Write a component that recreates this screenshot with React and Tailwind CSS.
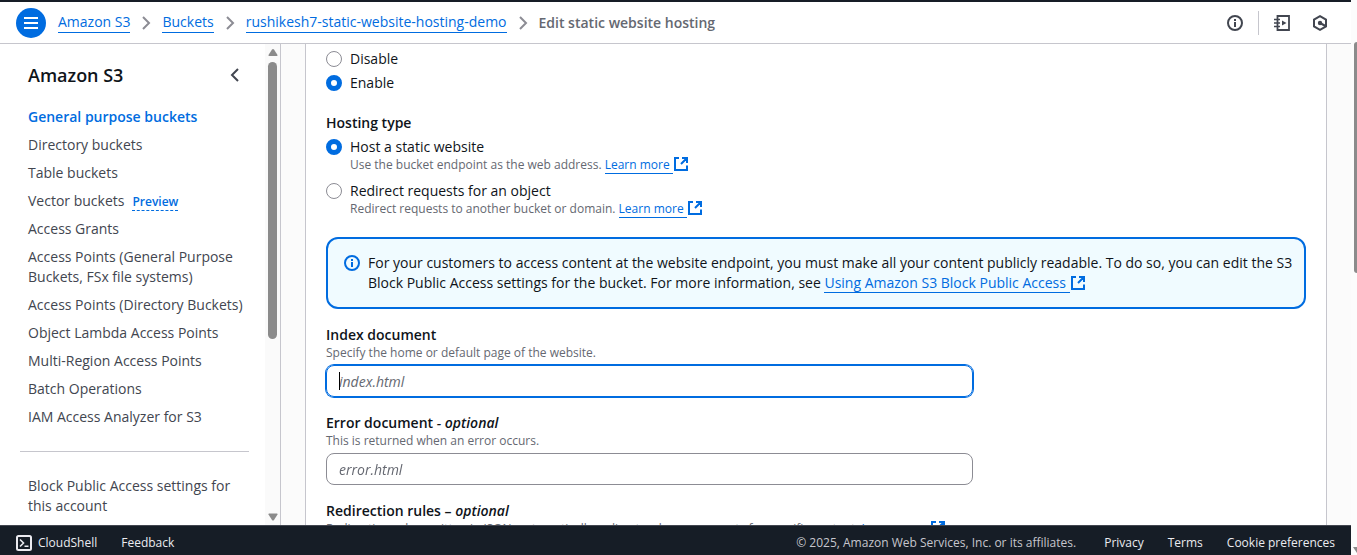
import React from "react";

const topLinks = [
  { label: "General purpose buckets", active: true },
  { label: "Directory buckets" },
  { label: "Table buckets" },
  { label: "Vector buckets", preview: true },
  { label: "Access Grants" },
  { label: "Access Points (General Purpose Buckets, FSx file systems)" },
  { label: "Access Points (Directory Buckets)" },
  { label: "Object Lambda Access Points" },
  { label: "Multi-Region Access Points" },
  { label: "Batch Operations" },
  { label: "IAM Access Analyzer for S3" },
];

const crumbs = ["Amazon S3", "Buckets", "rushikesh7-static-website-hosting-demo"];

function Icon({ className = "", width = 2, children }) {
  return (
    <svg
      viewBox="0 0 16 16"
      className={`size-4 shrink-0 ${className}`}
      fill="none"
      stroke="currentColor"
      strokeWidth={width}
      aria-hidden="true"
    >
      {children}
    </svg>
  );
}

function InfoIcon({ className }) {
  return (
    <Icon className={className}>
      <circle cx="8" cy="8" r="7" />
      <path d="M8 12V7M8 6V4" />
    </Icon>
  );
}

function ExternalLink({ children }) {
  return (
    <a href="#" className="text-[#006ce0]">
      <span className="border-b border-[#006ce0]">{children}&nbsp;</span>
      <Icon className="-my-1 inline align-[1px]">
        <path d="M6 2H2v12h12V9.5M9 2h5v5M13.5 2.5 8 8" />
      </Icon>
    </a>
  );
}

function RadioOption({ name, label, description, checked }) {
  return (
    <div className="flex gap-2">
      <input
        type="radio"
        name={name}
        id={`${name}-${label}`}
        defaultChecked={checked}
        className="mt-0.5 size-4 shrink-0 appearance-none rounded-full border border-[#8c8c94] bg-white checked:border-5 checked:border-[#006ce0]"
      />
      <div>
        <label htmlFor={`${name}-${label}`} className="block">
          {label}
        </label>
        {description && (
          <p className="text-xs text-[#656871]">
            {description} <ExternalLink>Learn more</ExternalLink>
          </p>
        )}
      </div>
    </div>
  );
}

function TextField({ id, label, optional, description, placeholder, active }) {
  return (
    <div>
      <label htmlFor={id} className="block font-semibold">
        {label}
        {optional && <i> - optional</i>}
      </label>
      <p className="text-xs text-[#656871]">{description}</p>
      <div className="relative mt-1 w-[66%]">
        <input
          id={id}
          type="text"
          autoFocus={active}
          placeholder={placeholder}
          className="peer block h-8 w-full rounded-lg border border-[#8c8c94] px-3 outline-none placeholder:text-[#656871] placeholder:italic placeholder-shown:caret-transparent focus:border-[#006ce0] focus:ring-1 focus:ring-[#006ce0]"
        />
        <span
          className="pointer-events-none absolute top-[7px] left-[13px] hidden h-[18px] w-px bg-black peer-focus:peer-placeholder-shown:block"
          aria-hidden="true"
        />
      </div>
    </div>
  );
}

function Header() {
  return (
    <header className="flex h-[44px] shrink-0 items-center border-t-2 border-b border-t-[#161d26] border-b-[#c6c6cd] bg-white pr-[23px] pl-4">
      <button aria-label="Open navigation" className="flex size-[30px] items-center justify-center rounded-full bg-[#006ce0] text-white">
        <Icon>
          <path d="M1 3h14M1 8h14M1 13h14" />
        </Icon>
      </button>
      <nav aria-label="Breadcrumbs" className="ml-3 flex items-center gap-2">
        {crumbs.map((crumb) => (
          <React.Fragment key={crumb}>
            <a href="#" className="border-b border-[#006ce0] text-[#006ce0]">
              {crumb}
            </a>
            <Icon className="text-[#8c8c94]">
              <path d="m5 2 6 6-6 6" />
            </Icon>
          </React.Fragment>
        ))}
        <span className="font-semibold text-[#656871]">Edit static website hosting</span>
      </nav>
      <div className="ml-auto flex items-center text-[#424650]">
        <button aria-label="Info">
          <InfoIcon />
        </button>
        <div className="mx-[15px] h-6 w-px bg-[#c6c6cd]" />
        <button aria-label="Tutorials">
          <Icon>
            <path d="M3.5 1h11.5v14H3.5z" strokeWidth="1.8" />
            <path d="M0 4.5h6M0 8h6M0 11.5h6" strokeWidth="1.6" />
            <path d="M8 5.5v5L12.5 8z" fill="currentColor" stroke="none" />
          </Icon>
        </button>
        <button aria-label="Settings" className="ml-[22px]">
          <Icon>
            <path d="m8 1.2 6 3.4v6.8l-6 3.4-6-3.4V4.6z" />
            <circle cx="8" cy="8" r="2.2" fill="currentColor" stroke="none" />
            <path d="m8 8 5.5 3" />
          </Icon>
        </button>
      </div>
    </header>
  );
}

function Sidebar() {
  return (
    <aside className="flex w-[281px] shrink-0 overflow-hidden border-r border-[#c6c6cd] bg-white">
      <div className="min-w-0 flex-1 px-5 pt-5">
        <div className="flex items-center justify-between pr-0.5 pl-2">
          <h2 className="text-lg leading-[22px] font-semibold text-[#0f141a]">Amazon S3</h2>
          <button aria-label="Close navigation" className="text-[#424650]">
            <Icon>
              <path d="M11 2 5 8l6 6" />
            </Icon>
          </button>
        </div>
        <ul className="mt-[21px] flex flex-col gap-2 pl-2 text-[#424650]">
          {topLinks.map(({ label, active, preview }) => (
            <li key={label}>
              <a href="#" className={active ? "font-semibold text-[#006ce0]" : ""}>
                {label}
              </a>
              {preview && (
                <button className="ml-2 border-b border-dashed border-[#006ce0] text-xs font-semibold text-[#006ce0]">
                  Preview
                </button>
              )}
            </li>
          ))}
        </ul>
        <hr className="-mr-1 mt-6 mb-6 border-[#c6c6cd]" />
        <a href="#" className="block pl-2 text-[#424650]">
          Block Public Access settings for this account
        </a>
      </div>
      <div className="flex w-[15px] shrink-0 flex-col items-center bg-[#fafafa] py-1" aria-hidden="true">
        <svg viewBox="0 0 10 8" className="h-2 w-2.5 shrink-0 fill-[#8b8b8b]">
          <path d="M4 1.6Q5 .4 6 1.6L9.500 7q.3 1-.7 1H1.200Q.2 8 .5 7z" />
        </svg>
        <div className="mt-1.5 h-[277px] w-[9px] rounded-full bg-[#8b8b8b]" />
        <svg viewBox="0 0 10 8" className="mt-auto h-2 w-2.5 shrink-0 fill-[#8b8b8b]">
          <path d="M4 6.9Q5 8.1 6 6.9L9.500 1.500q.3-1-.7-1H1.200Q.2.500.500 1.500z" />
        </svg>
      </div>
    </aside>
  );
}

function HostingForm() {
  return (
    <main className="min-w-0 flex-1 overflow-hidden bg-[#fbfbfb] px-6">
      <form className="h-full border-x border-[#c6c6cd] bg-white px-5 pt-[5px]">
        <div className="flex flex-col gap-1">
          <RadioOption name="hosting" label="Disable" />
          <RadioOption name="hosting" label="Enable" checked />
        </div>
        <fieldset className="mt-5">
          <legend className="font-semibold">Hosting type</legend>
          <div className="mt-1 flex flex-col gap-2">
            <RadioOption
              name="type"
              label="Host a static website"
              description="Use the bucket endpoint as the web address."
              checked
            />
            <RadioOption
              name="type"
              label="Redirect requests for an object"
              description="Redirect requests to another bucket or domain."
            />
          </div>
        </fieldset>
        <div className="mt-5 flex gap-2 rounded-xl border-2 border-[#006ce0] bg-[#f0fbff] py-3.5 pr-2 pl-4">
          <InfoIcon className="mt-0.5 text-[#006ce0]" />
          <p>
            For your customers to access content at the website endpoint, you must make all your content publicly
            readable. To do so, you can edit the S3 Block Public Access settings for the bucket. For more information,
            see <ExternalLink>Using Amazon S3 Block Public Access</ExternalLink>
          </p>
        </div>
        <div className="mt-4 flex flex-col gap-4">
          <TextField
            id="index-document"
            label="Index document"
            description="Specify the home or default page of the website."
            placeholder="index.html"
            active
          />
          <TextField
            id="error-document"
            label="Error document"
            optional
            description="This is returned when an error occurs."
            placeholder="error.html"
          />
          <div>
            <h3 className="font-semibold">
              Redirection rules – <i>optional</i>
            </h3>
            <p className="text-xs text-[#656871]">
              Redirection rules, written in JSON, automatically redirect webpage requests for specific content.{" "}
              <ExternalLink>Learn more</ExternalLink>
            </p>
          </div>
        </div>
      </form>
    </main>
  );
}

function Footer() {
  return (
    <footer className="flex h-[30px] shrink-0 items-center border-t border-[#424650] bg-[#161d26] px-4 pt-1 text-xs text-[#ebebf0]">
      <button className="flex items-center gap-1.5 font-medium">
        <Icon>
          <rect x="1" y="1" width="14" height="14" rx="1.5" />
          <path d="m4 4.500 3.500 3.500L4 11.500M8.500 11.200H12.500" strokeWidth="1.6" />
        </Icon>
        CloudShell
      </button>
      <button className="ml-6 font-medium">Feedback</button>
      <p className="ml-auto text-[#c6c6cd]">© 2025, Amazon Web Services, Inc. or its affiliates.</p>
      <nav className="ml-7 flex gap-6 font-medium">
        <a href="#">Privacy</a>
        <a href="#">Terms</a>
        <a href="#">Cookie preferences</a>
      </nav>
    </footer>
  );
}

export default function App() {
  return (
    <div className="flex h-screen overflow-hidden bg-white font-['Open_Sans','Noto_Sans',sans-serif] text-sm leading-5 text-[#0f141a]">
      <div className="flex min-w-0 flex-1 flex-col">
        <Header />
        <div className="flex min-h-0 flex-1">
          <Sidebar />
          <HostingForm />
        </div>
        <Footer />
      </div>
      <div className="flex w-1.5 shrink-0 flex-col items-end justify-between bg-[#fcfcfc] pt-[42px] pb-0.5" aria-hidden="true">
        <div className="h-[231px] w-[3px] rounded-l-full bg-[#8b8b8b]" />
        <svg viewBox="0 0 4 6" className="h-1.5 w-1 fill-[#8b8b8b]">
          <path d="M0 0h4v6z" />
        </svg>
      </div>
    </div>
  );
}
